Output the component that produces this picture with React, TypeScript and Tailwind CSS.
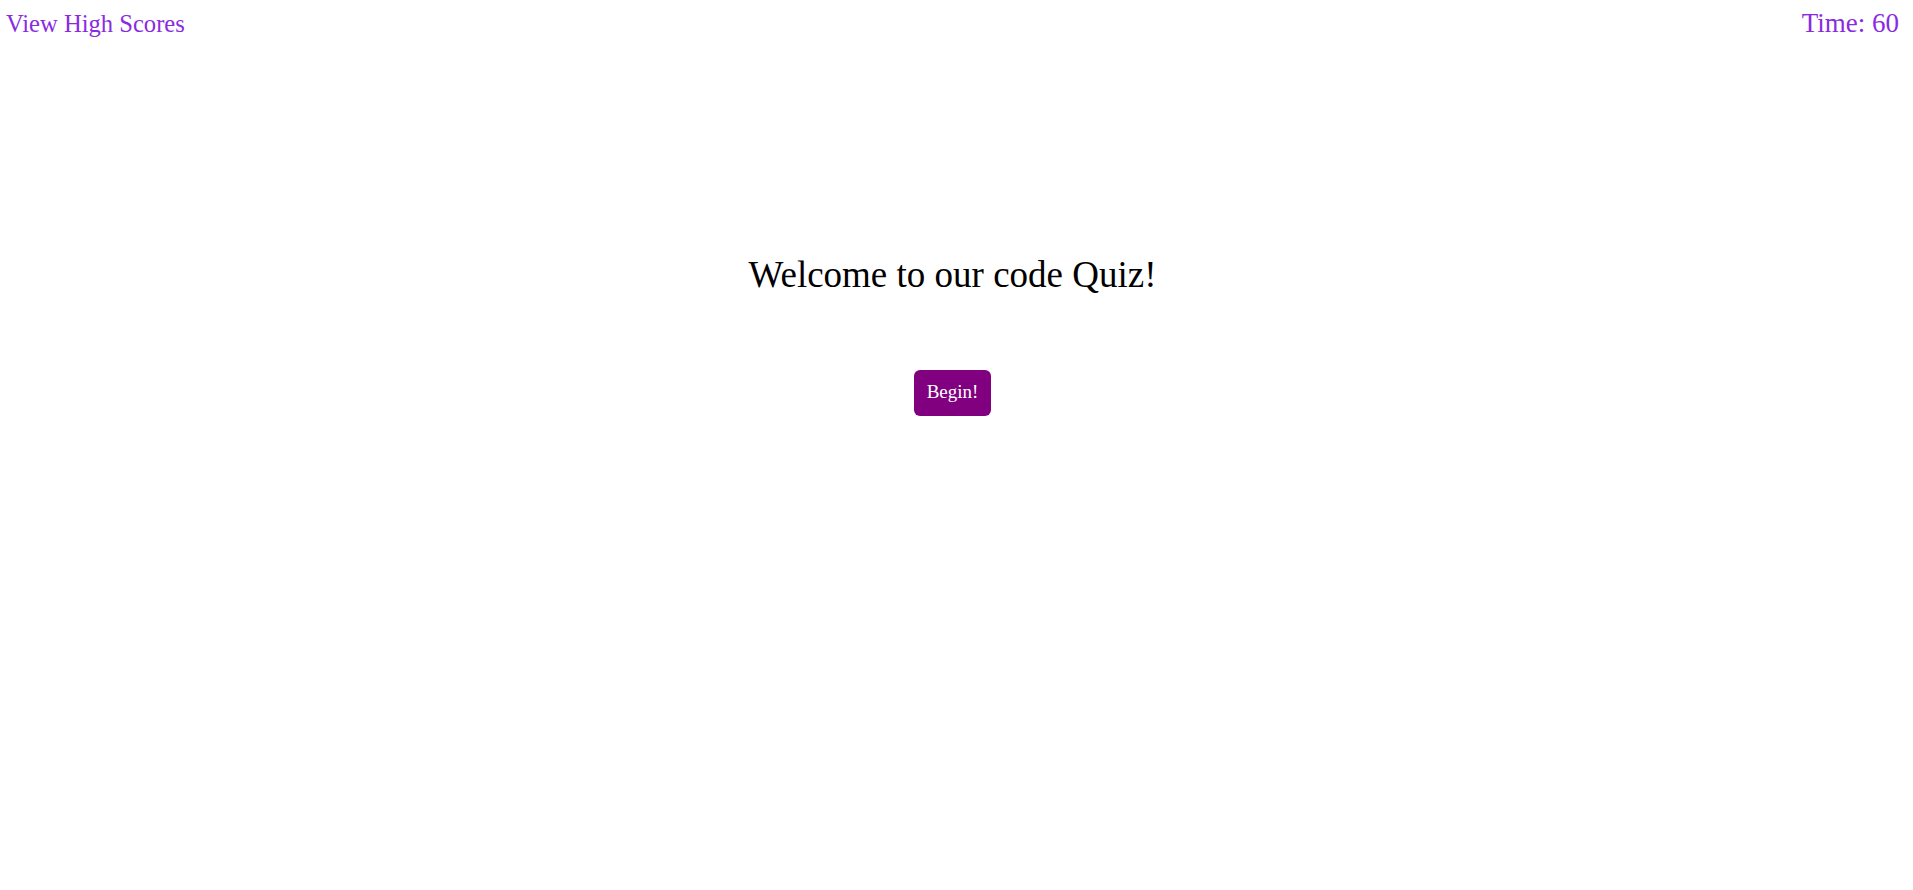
export default function App() {
  return (
    <div className="min-h-screen bg-white font-['Liberation_Serif',serif] text-black">
      {/* Header */}
      <header className="flex items-baseline justify-between pl-[6px] pr-[14px] pt-[8px]">
        <a href="#" className="text-[24.6px] leading-[1.15] text-[#8a2be2]">
          View High Scores
        </a>
        <span className="text-[27px] leading-[1.15] text-[#8a2be2]">Time: 60</span>
      </header>

      {/* Start screen */}
      <main className="flex flex-col items-center pr-[8px] pt-[215px]">
        <h1 className="text-[37px] leading-[1.15]">Welcome to our code Quiz!</h1>
        <button className="mt-[73px] h-[46px] w-[77px] rounded-[6px] bg-[#800080] text-[19px] text-white">
          Begin!
        </button>
      </main>
    </div>
  );
}
